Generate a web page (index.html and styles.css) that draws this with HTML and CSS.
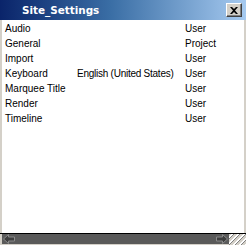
FILE: index.html
```html
<!DOCTYPE html>
<html>
<head>
<meta charset="utf-8">
<link rel="stylesheet" href="styles.css">
</head>
<body>
<div class="window">
  <div class="titlebar">
    <span class="title">Site_Settings</span>
    <span class="close">
      <svg width="8" height="7" viewBox="0 0 8 7"><path d="M0 0h2l2 2 2-2h2L5 3.5 8 7H6L4 5 2 7H0l3-3.5z" fill="#000"/></svg>
    </span>
  </div>
  <div class="content">
    <div class="row"><span>Audio</span><span></span><span>User</span></div>
    <div class="row"><span>General</span><span></span><span>Project</span></div>
    <div class="row"><span>Import</span><span></span><span>User</span></div>
    <div class="row"><span>Keyboard</span><span>English (United States)</span><span>User</span></div>
    <div class="row"><span>Marquee Title</span><span></span><span>User</span></div>
    <div class="row"><span>Render</span><span></span><span>User</span></div>
    <div class="row"><span>Timeline</span><span></span><span>User</span></div>
  </div>
  <div class="hscroll">
    <div class="track">
      <svg class="arrow" width="12" height="10" viewBox="0 0 12 10"><path d="M0.5 5 5.5 0.5V3H11.5V7H5.5V9.5Z" fill="#3e3e3e" stroke="#8a8a8a"/></svg>
      <svg class="arrow" width="12" height="10" viewBox="0 0 12 10"><path d="M11.5 5 6.5 0.5V3H0.5V7H6.5V9.5Z" fill="#3e3e3e" stroke="#8a8a8a"/></svg>
    </div>
    <div class="grip"></div>
  </div>
</div>
</body>
</html>
```
FILE: styles.css
```css
html, body {
  margin: 0;
  padding: 0;
  background: #d4d0c8;
}
.window {
  width: 246px;
  height: 245px;
  display: flex;
  flex-direction: column;
  background: #d4d0c8;
}
.titlebar {
  height: 20px;
  display: flex;
  align-items: center;
  justify-content: space-between;
  background: linear-gradient(to right, #0a246a 0%, #3a6ea5 45%, #a6caf0 100%);
  padding-left: 22px;
  padding-right: 4px;
  box-sizing: border-box;
}
.title {
  font-family: "DejaVu Sans", sans-serif;
  font-weight: bold;
  font-size: 10.4px;
  color: #fff;
  line-height: 20px;
}
.close {
  width: 16px;
  height: 14px;
  box-sizing: border-box;
  background: #d4d0c8;
  border-top: 1px solid #fff;
  border-left: 1px solid #fff;
  border-right: 1px solid #404040;
  border-bottom: 1px solid #404040;
  box-shadow: inset -1px -1px 0 #808080;
  display: flex;
  align-items: center;
  justify-content: center;
}
.content {
  flex: 1;
  background: #fff;
  margin: 0 2px;
  padding-top: 1px;
  padding-left: 3px;
  font-family: "Liberation Sans", Arial, sans-serif;
  font-size: 10px;
  color: #000;
}
.row {
  display: grid;
  grid-template-columns: 72px 108px 1fr;
  height: 15px;
  line-height: 15px;
  white-space: nowrap;
}
.row span:nth-child(2) {
  letter-spacing: -0.25px;
}
.hscroll {
  height: 12px;
  border-top: 1px solid #000;
  display: flex;
  padding-left: 2px;
  box-sizing: border-box;
}
.track {
  flex: 1;
  height: 10px;
  background: #5a5a5a;
  display: flex;
  justify-content: space-between;
  align-items: center;
  padding: 0 1px;
}
.arrow {
  display: block;
}
.grip {
  width: 17px;
  height: 11px;
  background: repeating-linear-gradient(135deg, #d4d0c8 0 2px, #ffffff 2px 3px, #808080 3px 4.2px);
}
```
